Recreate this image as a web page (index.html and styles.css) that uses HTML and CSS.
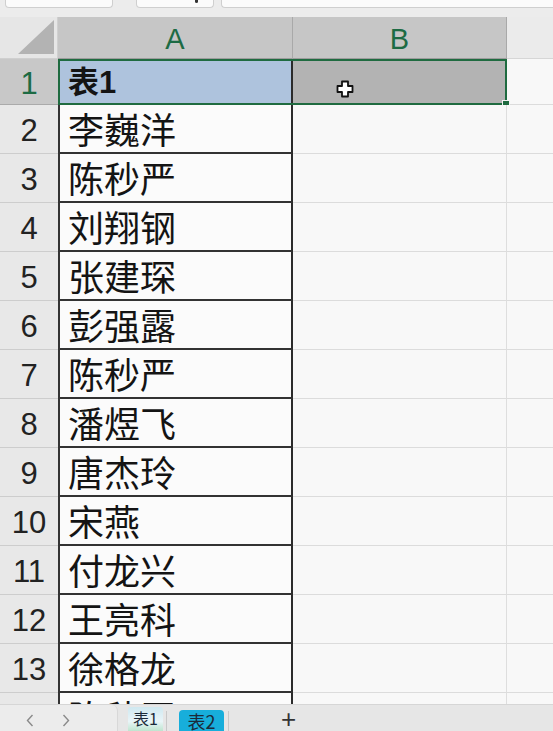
FILE: index.html
```html
<!DOCTYPE html>
<html lang="zh">
<head>
<meta charset="utf-8">
<link rel="stylesheet" href="styles.css">
</head>
<body>
<div class="app">
  <div class="toolbar">
    <div class="tbox tbox1"></div>
    <div class="tbox tbox2"><span class="tmark"></span></div>
    <div class="tbox tbox3"></div>
  </div>
  <div class="sheet">
    <div class="row head">
      <div class="corner"><svg class="tri" width="36" height="34" viewBox="0 0 36 34"><polygon points="0,34 36,34 36,0" fill="#b3b3b3"/></svg></div>
      <div class="colh sel">A</div>
      <div class="colh sel">B</div>
      <div class="colh rest"></div>
    </div>
    <div class="row r1">
      <div class="rowh sel">1</div>
      <div class="cell a a1">表1</div>
      <div class="cell b b1"><svg class="cur" width="18" height="18" viewBox="0 0 18 18"><path d="M6 1.5h6v4.5h4.5v6h-4.5v4.5h-6v-4.5h-4.5v-6h4.5z" fill="#fff" stroke="#111" stroke-width="1.8" stroke-linejoin="round"/></svg></div>
      <div class="cell rest"></div>
      <div class="selbox"><span class="handle"></span></div>
    </div>
    <div class="row"><div class="rowh">2</div><div class="cell a">李巍洋</div><div class="cell b"></div><div class="cell rest"></div></div>
    <div class="row"><div class="rowh">3</div><div class="cell a">陈秒严</div><div class="cell b"></div><div class="cell rest"></div></div>
    <div class="row"><div class="rowh">4</div><div class="cell a">刘翔钢</div><div class="cell b"></div><div class="cell rest"></div></div>
    <div class="row"><div class="rowh">5</div><div class="cell a">张建琛</div><div class="cell b"></div><div class="cell rest"></div></div>
    <div class="row"><div class="rowh">6</div><div class="cell a">彭强露</div><div class="cell b"></div><div class="cell rest"></div></div>
    <div class="row"><div class="rowh">7</div><div class="cell a">陈秒严</div><div class="cell b"></div><div class="cell rest"></div></div>
    <div class="row"><div class="rowh">8</div><div class="cell a">潘煜飞</div><div class="cell b"></div><div class="cell rest"></div></div>
    <div class="row"><div class="rowh">9</div><div class="cell a">唐杰玲</div><div class="cell b"></div><div class="cell rest"></div></div>
    <div class="row"><div class="rowh">10</div><div class="cell a">宋燕</div><div class="cell b"></div><div class="cell rest"></div></div>
    <div class="row"><div class="rowh">11</div><div class="cell a">付龙兴</div><div class="cell b"></div><div class="cell rest"></div></div>
    <div class="row"><div class="rowh">12</div><div class="cell a">王亮科</div><div class="cell b"></div><div class="cell rest"></div></div>
    <div class="row"><div class="rowh">13</div><div class="cell a">徐格龙</div><div class="cell b"></div><div class="cell rest"></div></div>
    <div class="row"><div class="rowh">14</div><div class="cell a">陈秒严</div><div class="cell b"></div><div class="cell rest"></div></div>
  </div>
  <div class="tabbar">
    <div class="nav">
      <svg class="chev" width="8" height="13" viewBox="0 0 8 13"><path d="M6.5 1L1.5 6.5L6.5 12" fill="none" stroke="#8a8a8a" stroke-width="1.4"/></svg>
      <svg class="chev" width="8" height="13" viewBox="0 0 8 13"><path d="M1.5 1L6.5 6.5L1.5 12" fill="none" stroke="#8a8a8a" stroke-width="1.4"/></svg>
    </div>
    <div class="tab t1">表1</div>
    <span class="sep"></span>
    <div class="tab t2">表2</div>
    <span class="sep"></span>
    <div class="plus">+</div>
  </div>
</div>
</body>
</html>
```
FILE: styles.css
```css
html, body { margin: 0; padding: 0; }
body {
  width: 553px; height: 731px; overflow: hidden;
  background: #f7f7f7;
  font-family: "Liberation Sans", "Noto Sans CJK SC", sans-serif;
}
.app { display: flex; flex-direction: column; height: 731px; }

.toolbar {
  height: 17px; flex: none; background: #ececec;
  display: flex; align-items: flex-start;
}
.tbox {
  height: 8px; background: #fbfbfb; border: 1px solid #cfcfcf; border-top: none;
  border-radius: 0 0 4px 4px; box-sizing: border-box; position: relative;
}
.tbox1 { width: 108px; margin-left: 5px; }
.tbox2 { width: 78px; margin-left: 23px; }
.tbox3 { flex: 1; margin-left: 7px; border-right: none; border-radius: 0 0 0 4px; }
.tmark { position: absolute; left: 58px; top: 0; width: 3px; height: 3px; background: #333; border-radius: 0 0 2px 2px; }

.sheet { height: 687px; flex: none; overflow: hidden; background: #f7f7f7; }
.row {
  display: grid; grid-template-columns: 58px 235px 214px 1fr; grid-template-rows: 49px;
  height: 49px; position: relative; line-height: 1.2;
}
.row.head { height: 42px; grid-template-rows: 42px; }
.row.r1 { height: 46px; grid-template-rows: 46px; }

.corner { background: #e6e6e6; position: relative; border-right: 1px solid #d0d0d0; border-bottom: 1px solid #cfcfcf; box-sizing: border-box; }
.tri { position: absolute; right: 3px; bottom: 4px; }
.colh {
  display: flex; align-items: center; justify-content: center; padding-top: 4px;
  font-size: 29px; color: #1d6b44; box-sizing: border-box;
  border-right: 1px solid #a9a9a9; border-bottom: 1px solid #9c9c9c;
}
.colh.sel { background: #c6c6c6; }
.colh.rest { background: #ebebeb; border-right: none; border-bottom: 1px solid #d6d6d6; }

.rowh {
  display: flex; align-items: center; justify-content: center;
  font-size: 31px; color: #222; background: #e8e8e8;
  border-bottom: 1px solid #cdcdcd; box-sizing: border-box; padding-top: 4px;
}
.rowh.sel { background: #c8c8c8; color: #1d6b44; border-bottom: 1px solid #aaa; }

.cell { box-sizing: border-box; display: flex; align-items: center; }
.cell.a {
  padding-left: 8px; font-family: "Noto Sans CJK SC", sans-serif; font-size: 36px; color: #141414;
  background: #fbfbfb; border-left: 2px solid #333; border-right: 2px solid #2b2b2b; border-bottom: 2px solid #333;
}
.cell.b { background: #f8f8f8; border-right: 1px solid #dedede; border-bottom: 1px solid #dcdcdc; }
.cell.rest { background: #f8f8f8; border-bottom: 1px solid #dcdcdc; }

.cell.a1 { background: #aec3dd; font-weight: bold; font-size: 31px; font-family: "Liberation Sans", "Noto Sans CJK SC", sans-serif; border-bottom-color: #333; padding-top: 4px; }
.cell.b1 { background: #b3b3b3; position: relative; }
.cur { position: absolute; left: 43px; top: 21px; }

.selbox {
  position: absolute; left: 58px; top: 0; width: 449px; height: 46px;
  border: 2px solid #1f6b40; box-sizing: border-box; pointer-events: none;
}
.handle { position: absolute; right: -5px; bottom: -5px; width: 6px; height: 6px; background: #1f6b40; border: 1px solid #f4f4f4; }

.tabbar {
  height: 27px; flex: none; box-sizing: border-box; background: #e6e6e6; border-top: 1px solid #d6d6d6;
  display: flex; align-items: flex-end;
}
.nav {
  width: 118px; height: 26px; background: #ececec; border-radius: 0 6px 0 0;
  border-right: 1px solid #d8d8d8;
  display: flex; align-items: center; gap: 28px; padding-left: 26px; padding-top: 4px; box-sizing: border-box;
}
.tab {
  font-family: "Noto Sans CJK SC", sans-serif; color: #1b2a3a; text-align: center; box-sizing: border-box;
  line-height: 20px;
}
.t1 {
  margin-left: 10px; width: 35px; height: 24px; font-size: 16px; padding-top: 1px;
  background: linear-gradient(#cfe8f0, #e9f5f8 60%, #bfe5cf);
  border-radius: 3px 3px 0 0;
}
.t2 {
  margin-left: 12px; width: 45px; height: 21px; font-size: 18px; line-height: 21px; padding-top: 1px;
  background: #17aedb; border-radius: 4px 4px 0 0;
}
.sep { width: 1px; height: 20px; background: #c8c8c8; margin-left: 3px; }
.t2 + .sep { margin-left: 4px; }
.plus { margin-left: 52px; font-size: 26px; color: #333; line-height: 24px; height: 24px; }
```
